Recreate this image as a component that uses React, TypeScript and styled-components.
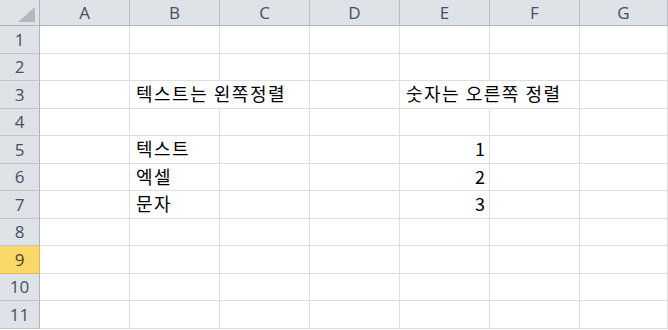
import React from 'react'
import styled, { createGlobalStyle } from 'styled-components'

const GlobalStyle = createGlobalStyle`
    html, body {
        margin: 0;
        padding: 0;
        background: #ffffff;
        overflow: hidden;
    }
`

const COLUMNS = ['A', 'B', 'C', 'D', 'E', 'F', 'G']
const ROW_COUNT = 11
const ACTIVE_ROW = 9

const SheetGrid = styled.div`
    display: grid;
    grid-template-columns: 40px repeat(6, 90px) 1fr;
    grid-template-rows: 26px repeat(${ROW_COUNT}, 27.5px);
    width: 668px;
    height: 330px;
    overflow: hidden;
    font-family: "Noto Sans CJK KR", "Noto Sans", sans-serif;
`

const Corner = styled.div`
    position: relative;
    background: #dfe2e6;
    border-right: 1px solid #aeb3ba;
    border-bottom: 1px solid #aeb3ba;
    box-sizing: border-box;
`

const CornerTriangle = styled.div`
    position: absolute;
    right: 4px;
    bottom: 3px;
    width: 0;
    height: 0;
    border-left: 17px solid transparent;
    border-bottom: 15px solid #b4b8be;
`

const ColumnHeader = styled.div`
    display: flex;
    align-items: center;
    justify-content: center;
    background: #dfe2e6;
    border-right: 1px solid #babec4;
    border-bottom: 1px solid #aeb3ba;
    box-sizing: border-box;
    color: #445064;
    font-family: "Open Sans", "Noto Sans", sans-serif;
    font-size: 17px;
`

const RowHeader = styled.div<{ $active: boolean }>`
    display: flex;
    align-items: center;
    justify-content: center;
    background: ${props => props.$active ? '#f8d868' : '#dfe2e6'};
    border-right: 1px solid ${props => props.$active ? '#e8b84a' : '#aeb3ba'};
    border-bottom: 1px solid ${props => props.$active ? '#e8b84a' : '#c2c6cc'};
    box-sizing: border-box;
    color: ${props => props.$active ? '#4a4330' : '#445064'};
    font-family: "Open Sans", "Noto Sans", sans-serif;
    font-size: 17px;
`

const Cell = styled.div<{ $span?: number, $align?: 'left' | 'right' }>`
    grid-column: span ${props => props.$span || 1};
    display: flex;
    align-items: center;
    justify-content: ${props => props.$align === 'right' ? 'flex-end' : 'flex-start'};
    padding: 0 4px 2px 6px;
    border-right: 1px solid #dcdedf;
    border-bottom: 1px solid #dcdedf;
    box-sizing: border-box;
    white-space: nowrap;
    color: #000000;
    font-size: 18px;
    letter-spacing: ${props => props.$align === 'right' ? '0' : '1.5px'};
    line-height: 20px;
`

interface CellData {
    text: string
    span?: number
    align?: 'left' | 'right'
}

const data: Record<string, CellData> = {
    'B3': { text: '텍스트는 왼쪽정렬', span: 2 },
    'E3': { text: '숫자는 오른쪽 정렬', span: 2 },
    'B5': { text: '텍스트' },
    'B6': { text: '엑셀' },
    'B7': { text: '문자' },
    'E5': { text: '1', align: 'right' },
    'E6': { text: '2', align: 'right' },
    'E7': { text: '3', align: 'right' },
}

const renderRow = (row: number) => {
    const cells: JSX.Element[] = []
    let col = 0
    while (col < COLUMNS.length) {
        const key = COLUMNS[col] + row
        const cell = data[key]
        cells.push(
            <Cell key={key} $span={cell?.span} $align={cell?.align}>
                {cell?.text}
            </Cell>
        )
        col += cell?.span || 1
    }
    return cells
}

const App = (): JSX.Element => {
    const rows = Array.from({ length: ROW_COUNT }, (_, i) => i + 1)

    return (
        <>
            <GlobalStyle />
            <SheetGrid>
                <Corner>
                    <CornerTriangle />
                </Corner>
                {COLUMNS.map(c => <ColumnHeader key={c}>{c}</ColumnHeader>)}
                {rows.map(row => (
                    <React.Fragment key={row}>
                        <RowHeader $active={row === ACTIVE_ROW}>{row}</RowHeader>
                        {renderRow(row)}
                    </React.Fragment>
                ))}
            </SheetGrid>
        </>
    )
}

export default App
